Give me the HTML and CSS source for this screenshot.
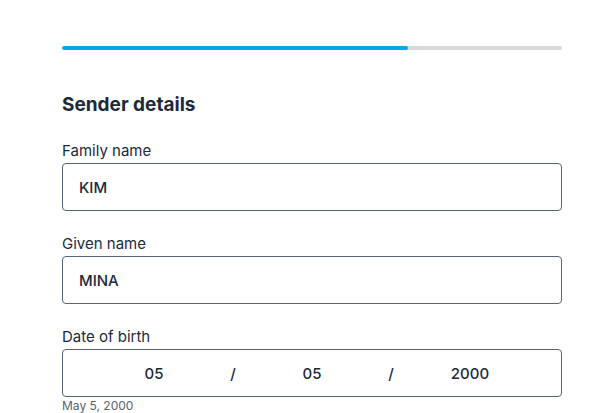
FILE: index.html
```html
<!DOCTYPE html>
<html lang="en">
<head>
<meta charset="utf-8">
<title>Sender details</title>
<link rel="stylesheet" href="styles.css">
</head>
<body>
<main class="page">
  <div class="progress"><div class="progress-fill" style="width: 69.2%"></div></div>
  <h2 class="title">Sender details</h2>
  <div class="field">
    <label class="label">Family name</label>
    <div class="input">KIM</div>
  </div>
  <div class="field">
    <label class="label">Given name</label>
    <div class="input">MINA</div>
  </div>
  <div class="field">
    <label class="label">Date of birth</label>
    <div class="input date">
      <span>05</span><span class="sep">/</span><span>05</span><span class="sep">/</span><span>2000</span>
    </div>
    <div class="hint">May 5, 2000</div>
  </div>
</main>
</body>
</html>
```
FILE: styles.css
```css
* { box-sizing: border-box; }
html, body { margin: 0; padding: 0; background: #fff; }
body {
  font-family: Inter, "Noto Sans", "Liberation Sans", sans-serif;
  color: #1c2a3a;
}
.page {
  width: 500px;
  margin-left: 62px;
  padding-top: 46px;
}
.progress {
  height: 4px;
  background: #d9d9d9;
  border-radius: 2px;
  overflow: hidden;
}
.progress-fill {
  height: 100%;
  background: #00a6e4;
  border-radius: 2px;
}
.title {
  margin: 43px 0 0;
  font-size: 19px;
  line-height: 24px;
  font-weight: 700;
  color: #1c2a3a;
}
.field { display: flex; flex-direction: column; }
.field + .field { margin-top: 23px; }
.title + .field { margin-top: 24px; }
.label {
  font-size: 15px;
  line-height: 20px;
  margin-bottom: 2px;
  color: #1c2a3a;
}
.input {
  height: 48px;
  border: 1px solid #56657a;
  border-radius: 4px;
  padding: 0 16px;
  display: flex;
  align-items: center;
  font-size: 15px;
  font-weight: 500;
  color: #1c2a3a;
}
.input.date {
  display: grid;
  grid-template-columns: repeat(5, 79px);
  justify-content: center;
  justify-items: center;
  padding: 0;
}
.hint {
  font-size: 12px;
  line-height: 16px;
  margin-top: 1px;
  color: #5a6270;
}
```
